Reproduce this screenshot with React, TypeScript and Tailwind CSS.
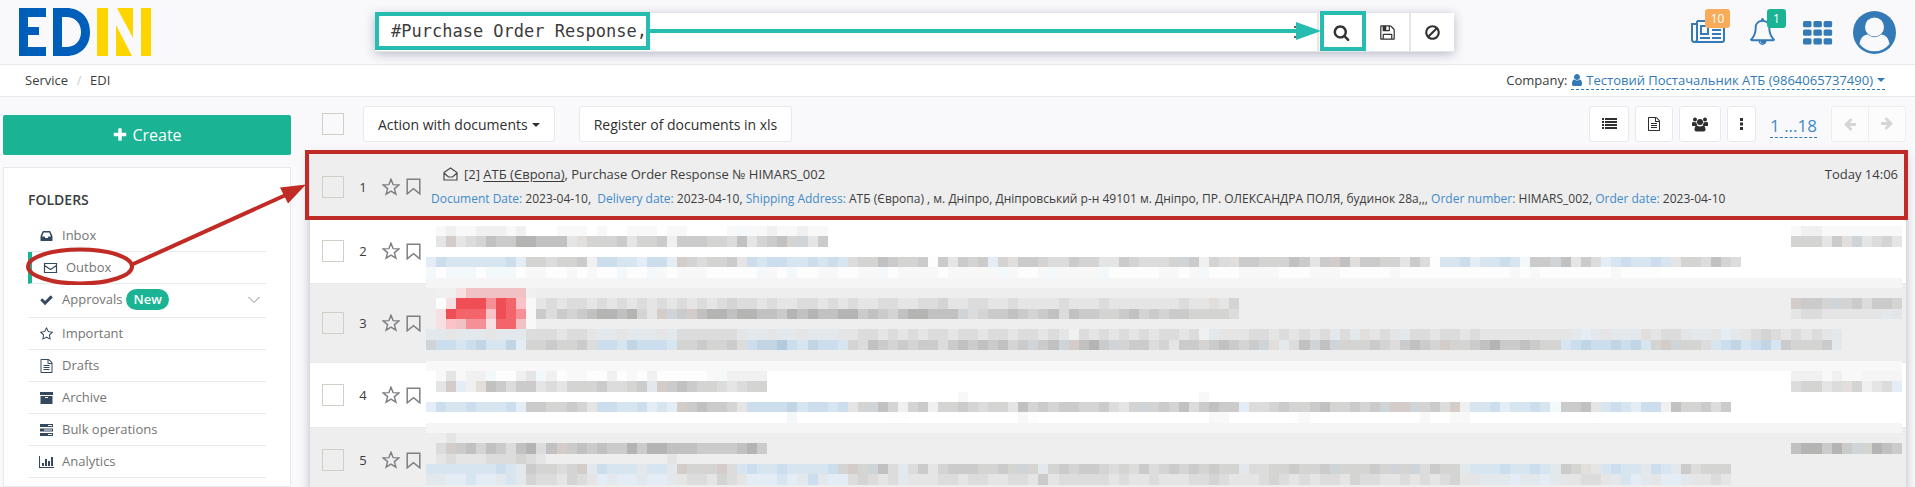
import React from "react";

const FA = {
  plus: "M1600 736v192q0 40-28 68t-68 28h-416v416q0 40-28 68t-68 28h-192q-40 0-68-28t-28-68v-416h-416q-40 0-68-28t-28-68v-192q0-40 28-68t68-28h416v-416q0-40 28-68t68-28h192q40 0 68 28t28 68v416h416q40 0 68 28t28 68z",
  search:
    "M1216 832q0-185-131.5-316.5t-316.5-131.5-316.5 131.5-131.5 316.5 131.5 316.5 316.5 131.5 316.5-131.5 131.5-316.5zm512 832q0 52-38 90t-90 38q-54 0-90-38l-343-342q-179 124-399 124-143 0-273.5-55.5t-225-150-150-225-55.5-273.5 55.5-273.5 150-225 225-150 273.5-55.5 273.5 55.5 225 150 150 225 55.5 273.5q0 220-124 399l343 343q37 37 37 90z",
  save: "M512 1536h768v-384h-768v384zm896 0h128v-896q0-14-10-38.5t-20-34.5l-281-281q-10-10-34-20t-39-10v416q0 40-28 68t-68 28h-576q-40 0-68-28t-28-68v-416h-128v1280h128v-416q0-40 28-68t68-28h832q40 0 68 28t28 68v416zm-384-928v-320q0-13-9.500-22.500t-22.500-9.500h-192q-13 0-22.500 9.500t-9.500 22.500v320q0 13 9.500 22.500t22.500 9.500h192q13 0 22.500-9.500t9.500-22.500zm640 32v928q0 40-28 68t-68 28h-1344q-40 0-68-28t-28-68v-1344q0-40 28-68t68-28h928q40 0 88 20t76 48l280 280q28 28 48 76t20 88z",
  ban: "M1440 893q0-161-87-295l-754 753q137 89 297 89 111 0 211.5-43.5t173.5-116.5 116-174.5 43-212.5zm-999 299l755-754q-135-91-300-91-148 0-273 73t-198 199-73 274q0 162 89 299zm1223-299q0 157-61 300t-163.5 246-245 164-298.5 61-298.5-61-245-164-163.5-246-61-300 61-299.5 163.5-245.5 245-164 298.5-61 298.5 61 245 164 163.5 245.5 61 299.5z",
  bell: "M912 1696q0-16-16-16-59 0-101.5-42.5t-42.5-101.5q0-16-16-16t-16 16q0 73 51.500 124.500t124.500 51.500q16 0 16-16zm-666-288h1300q-266-300-266-832 0-51-24-105t-69-103-121.5-80.5-169.5-31.5-169.500 31.500-121.500 80.500-69 103-24 105q0 532-266 832zm1482 0q0 52-38 90t-90 38h-448q0 106-75 181t-181 75-181-75-75-181h-448q-52 0-90-38t-38-90q50-42 91-88t85-119.500 74.500-158.500 50-206 19.500-260q0-152 117-282.500t307-158.500q-8-19-8-39 0-40 28-68t68-28 68 28 28 68q0 20-8 39 190 28 307 158.500t117 282.500q0 139 19.500 260t50 206 74.500 158.500 85 119.500 91 88z",
  user: "M1536 1399q0 109-62.500 187t-150.500 78h-854q-88 0-150.500-78t-62.500-187q0-85 8.500-160.500t31.500-152 58.500-131 94-89 134.500-34.500q131 128 313 128t313-128q76 0 134.500 34.500t94 89 58.500 131 31.500 152 8.500 160.500zm-256-887q0 159-112.500 271.500t-271.500 112.500-271.500-112.500-112.500-271.500 112.500-271.500 271.500-112.500 271.500 112.500 112.500 271.500z",
  file: "M1596 380q28 28 48 76t20 88v1152q0 40-28 68t-68 28h-1344q-40 0-68-28t-28-68v-1600q0-40 28-68t68-28h896q40 0 88 20t76 48zm-444-244v376h376q-10-29-22-41l-313-313q-12-12-41-22zm384 1528v-1024h-416q-40 0-68-28t-28-68v-416h-768v1536h1280zm-1024-864q0-14 9-23t23-9h704q14 0 23 9t9 23v64q0 14-9 23t-23 9h-704q-14 0-23-9t-9-23v-64zm736 224q14 0 23 9t9 23v64q0 14-9 23t-23 9h-704q-14 0-23-9t-9-23v-64q0-14 9-23t23-9h704zm0 256q14 0 23 9t9 23v64q0 14-9 23t-23 9h-704q-14 0-23-9t-9-23v-64q0-14 9-23t23-9h704z",
  inbox:
    "M1151 960h316q-1-3-2.500-8t-2.500-8l-212-496h-708l-212 496q-1 2-2.500 8t-2.500 8h316l95 192h320zm513 30v482q0 26-19 45t-45 19h-1408q-26 0-45-19t-19-45v-482q0-62 25-123l238-552q10-25 36.500-42t52.500-17h832q26 0 52.500 17t36.500 42l238 552q25 61 25 123z",
  check:
    "M1671 566q0 40-28 68l-724 724-136 136q-28 28-68 28t-68-28l-136-136-362-362q-28-28-28-68t28-68l136-136q28-28 68-28t68 28l294 295 656-657q28-28 68-28t68 28l136 136q28 28 28 68z",
  star: "M1201 1004l306-297-422-62-189-382-189 382-422 62 306 297-73 421 378-199 377 199zm527-357q0 22-26 48l-363 354 86 500q1 7 1 20 0 50-41 50-19 0-40-12l-449-236-449 236q-22 12-40 12-21 0-31.500-14.500t-10.500-35.500q0-6 2-20l86-500-364-354q-25-27-25-48 0-37 56-46l502-73 225-455q19-41 49-41t49 41l225 455 502 73q56 9 56 46z",
  arrow:
    "M1664 896v128q0 53-32.500 90.500t-84.500 37.500h-704l293 294q38 36 38 90t-38 90l-75 76q-37 37-90 37-52 0-91-37l-651-652q-37-37-37-90 0-52 37-91l651-650q38-38 91-38 52 0 90 38l75 74q38 38 38 91t-38 91l-293 293h704q52 0 84.500 37.500t32.500 90.500z",
};

function Fa({ name, className }: { name: keyof typeof FA; className: string }) {
  return (
    <svg viewBox="0 0 1792 1792" fill="currentColor" className={className} aria-hidden="true">
      <path d={FA[name]} />
    </svg>
  );
}

function Caret({ className = "" }: { className?: string }) {
  return (
    <svg viewBox="0 0 8 4" className={"inline-block h-1 w-2 align-middle " + className} fill="currentColor" aria-hidden="true">
      <path d="M0 0h8L4 4z" />
    </svg>
  );
}

function Logo() {
  return (
    <svg viewBox="0 0 132 48" className="h-12 w-[132px]" role="img" aria-label="EDIN">
      <g fill="#005ebb">
        <path d="M0 0h27v9H9v10h11v8H9v12h18v9H0z" />
        <path fillRule="evenodd" d="M34 0h13c15 0 24 10 24 24s-9 24-24 24H34zM43 9v30h4c9 0 15-6 15-15S56 9 47 9z" />
      </g>
      <g fill="#ffd500">
        <path d="M78 0h11v48H78zM122 0h10v48h-10zM98 0h16v30zM97 17l16 31H97z" />
      </g>
    </svg>
  );
}

function Newspaper() {
  return (
    <svg viewBox="0 0 34 24" className="h-6 w-[34px]" fill="none" stroke="#337ab7" strokeWidth="2" aria-hidden="true">
      <path d="M6 1h27v19a2 2 0 0 1-2 2H3.500A2.500 2.500 0 0 1 1 19.500V4h5M6 1v18.500A2.500 2.500 0 0 1 3.500 22" />
      <path d="M10 6h7v8h-7zM9 18h10M21 6h9M21 10h9M21 14h9M21 18h9" />
    </svg>
  );
}

function Grid() {
  return (
    <svg viewBox="0 0 30 24" className="h-6 w-[30px]" fill="#337ab7" aria-hidden="true">
      {[0, 8.6, 17.2].map((y) =>
        [0, 10.4, 20.6].map((x) => <rect key={x + "-" + y} x={x} y={y} width="8.500" height="6.200" rx="1.500" />)
      )}
    </svg>
  );
}

function Avatar() {
  return (
    <svg viewBox="0 0 43 43" className="h-[43px] w-[43px]" aria-hidden="true">
      <circle cx="21.500" cy="21.500" r="21.500" fill="#337ab7" />
      <circle cx="21.500" cy="16" r="9.500" fill="#f9f9fb" />
      <path d="M6.500 33c1-6 4-9.500 8.500-9.500 4 3.500 9 3.500 13 0 4.500 0 7.500 3.500 8.500 9.500A19 19 0 0 1 6.500 33z" fill="#f9f9fb" />
    </svg>
  );
}

function FolderIcon({ kind }: { kind: string }) {
  const cls = "h-[14px] w-[15px] shrink-0 text-[#34495e]";
  if (kind === "inbox" || kind === "check" || kind === "star" || kind === "file") {
    return <Fa name={kind} className={cls} />;
  }
  return (
    <svg viewBox="0 0 15 14" className={cls} fill="currentColor" aria-hidden="true">
      {kind === "mail" && <path d="M1.500 2.500h12v9h-12zM1.500 4.500l6 4 6-4" fill="none" stroke="currentColor" strokeWidth="1.200" />}
      {kind === "archive" && <path fillRule="evenodd" d="M1 1h13v3H1zM1.500 5h12v8h-12zM6 6v1h3V6z" />}
      {kind === "server" && <path fillRule="evenodd" d="M1 1h13v3H1zM1 5.500h13v3H1zM1 10h13v3H1zM9 2v1h4V2zM5 6.500v1h8v-1zM9 11v1h4v-1z" />}
      {kind === "chart" && <path d="M0 1h1v11h14v1H0zM3 8h2v3H3zM6 4h2v7H6zM9 6h2v5H9zM12 2h2v9h-2z" />}
    </svg>
  );
}

const folders = [
  { label: "Inbox", icon: "inbox" },
  { label: "Outbox", icon: "mail", active: true },
  { label: "Approvals", icon: "check", isNew: true },
  { label: "Important", icon: "star" },
  { label: "Drafts", icon: "file" },
  { label: "Archive", icon: "archive" },
  { label: "Bulk operations", icon: "server" },
  { label: "Analytics", icon: "chart" },
];

const tones: Record<string, string> = {
  w: "#fdfdfd", a: "#f8f8f8", b: "#f0f0f0", c: "#e5e5e5", d: "#dcdcdc", e: "#d4d4d3", f: "#cbcbcb", g: "#c1c1c1", h: "#b4b4b3",
  i: "#d3ccc9", j: "#e2dedc", k: "#cfd4d8", p: "#f5f5f5",
  A: "#f3f8fb", B: "#e4edf5", C: "#d6e5f0", D: "#ccdeed", E: "#c2d5e4", F: "#b3c9dc", G: "#e3e8ec",
  R: "#f04e55", S: "#f3656b", T: "#f59196", U: "#f0c1c5", V: "#f8dfe2", W: "#fbc3c7",
};

type Strip = { y: number; h: number; runs: [number, string][] };

const full = "p".repeat(147);
const pale = "a".repeat(147);

const blurred: { n: number; height: number; bg: string; strips: Strip[] }[] = [
  {
    n: 2,
    height: 65,
    bg: "bg-white",
    strips: [
      { y: 7, h: 10, runs: [[1, "abaabbbab"], [13, "aaa.a..aaa.aa"], [30, "aAaabaabaa"], [136, "abbaaaaaaaa"]] },
      { y: 17, h: 11, runs: [[1, "cicdegffhhgggcjeeefceefbfffeedgcefgekcf"], [136, "eeecfjkcdec"]] },
      {
        y: 38,
        h: 10,
        runs: [
          [0, "BDCCCCCCDBeedeefbDDCCBDDBiedeefcDCDDCCDCDCde"],
          [44, "egfeefwfcfefBejffeddfeeccfedddekfbedjffeeegfcfigjffeec"],
          [98, "fdwCCDBCCDCAffkgcfdBCDCCDCceedged"],
        ],
      },
      { y: 48, h: 11, runs: [[0, "AwAAAwAAAwaawwawawwAwwAawaaawwwwwAawAwwaawwaaAwaaaawaaaaaAawwaAaaaaAwwwwwaawaAwwwaaaawwwaaawwwwwawwwwwwwwwwwawawwwwwwwawwww"]] },
      { y: 59, h: 6, runs: [[0, full]] },
    ],
  },
  {
    n: 3,
    height: 79,
    bg: "bg-[#eeeeee]",
    strips: [
      { y: 0, h: 4, runs: [[0, full]] },
      { y: 4, h: 10, runs: [[1, "bbVUUUUUUb"]] },
      { y: 14, h: 11, runs: [[1, "wVRRRTRSWa"], [11, "cdcddcdcdcdcdcdcdcdeddcdccddcdcdccddccddeccddccdccccdcccdcccccccdccjce"], [136, "iffekefdffe"]] },
      { y: 25, h: 10, runs: [[1, "VRSSSWRSTa"], [11, "fdfefghhghecikfighhghhggfhghgghhfgfeghhgggkdeffgfefgdgffeefgefeffeeeed"], [136, "cddccccccGc"]] },
      { y: 35, h: 10, runs: [[1, "VWUTTVSSUa"]] },
      {
        y: 45,
        h: 11,
        runs: [
          [0, "GGcGGGcGGGdddcddcGGcGGGcGddddddcGGcGGcGGGccd"],
          [44, "dcdcdcddcddcddcddcdcbdcdcdcdcddcdbGcccddcdcdcdGdGjcdc"],
          [97, "GddcddcdcccccccccGBGcGGGjcddcGGcBGcdedcdcdcG"],
        ],
      },
      {
        y: 56,
        h: 10,
        runs: [
          [0, "kDDCDECCEBeefeefdDDCEDDDCeefeefdDEEFDCEDDCed"],
          [44, "gfefeffdfgfgfgefkfgkighfkeffdecffefgfefkjGdgkgkeeefed"],
          [97, "fgfeieefghffgfeeCDEDDEDECeikeedCDECDECfeeefG"],
        ],
      },
      { y: 77, h: 2, runs: [[0, pale]] },
    ],
  },
  {
    n: 4,
    height: 65,
    bg: "bg-white",
    strips: [
      { y: 0, h: 8, runs: [[0, pale]] },
      { y: 8, h: 10, runs: [[1, "acabbAwwbcAbwaawwbwawbwwwwwaAbbbb"], [136, "bbbabaapppp"]] },
      { y: 18, h: 11, runs: [[1, "ciBbjgfdffcdceeefddefGifgfeedcdee"], [136, "deecdjebcdB"]] },
      { y: 29, h: 10, runs: [[53, "a"], [77, "a"]] },
      {
        y: 39,
        h: 10,
        runs: [
          [0, "BDCCDCCCDBffeefecDDCCDBCBifgffecDDDDECDDCDce"],
          [44, "kgebefbeefedeecgefeffeefdcekefegdfgffBddefeefgeefefki"],
          [97, "ikefdibCCDBCCDCAffgcCDCBDDbgeefdf"],
        ],
      },
      { y: 49, h: 11, runs: [[36, "A"], [46, "ww"], [59, "aw"], [78, "aa"], [86, "waw"], [99, "a"], [102, "aa"], [116, "w"]] },
      { y: 60, h: 5, runs: [[0, full]] },
    ],
  },
  {
    n: 5,
    height: 65,
    bg: "bg-[#eeeeee]",
    strips: [
      { y: 0, h: 5, runs: [[0, full]] },
      { y: 5, h: 10, runs: [[2, "c"]] },
      { y: 15, h: 11, runs: [[1, "difgegfdghdgifgfgffhfhhgggffffghf"], [136, "ghhfhfkehgf"]] },
      { y: 26, h: 10, runs: [[1, "cdcccdddedc"], [24, "c"]] },
      {
        y: 36,
        h: 10,
        runs: [
          [0, "CCCCCCCDCGfeedeiGDCCCGCCGieeeidCDCCDCCCCDeie"],
          [44, "kgdGdfcefffeefekeGefeffededfdefefefeeGddeefeefkeeefek"],
          [97, "ekdfeeGCCCDCCDCGfejcCDCCGDCGfdeee"],
        ],
      },
      {
        y: 46,
        h: 11,
        runs: [
          [0, "GGBBCBBGCGeddcedcBGBBGBBGcddcedcBBBCBGDGBBde"],
          [44, "dcdGcccddcddccddcfcdddddcdccdcccddedcccdedcdcddceddcc"],
          [97, "dcdcdeccGGGBGGBGccddcGCBGcBBGccdc"],
        ],
      },
    ],
  },
];

function Mosaic({ height, strips }: { height: number; strips: Strip[] }) {
  return (
    <svg
      viewBox={"0 0 1476 " + height}
      preserveAspectRatio="none"
      shapeRendering="crispEdges"
      className="block h-full w-full"
      aria-hidden="true"
    >
      {strips.map((s) =>
        s.runs.map(([start, cells]) =>
          cells.split("").map((c, k) => {
            if (!tones[c]) return null;
            const x = Math.round((start + k) * 10.04);
            const end = Math.round((start + k + 1) * 10.04);
            return <rect key={s.y + "-" + (start + k)} x={x} y={s.y} width={end - x} height={s.h} fill={tones[c]} />;
          })
        )
      )}
    </svg>
  );
}

function Tick({ label }: { label: string }) {
  return <input type="checkbox" aria-label={label} className="block h-[22px] w-[22px] shrink-0 appearance-none border border-[#d1cec8]" />;
}

function RowTools({ n }: { n: number }) {
  return (
    <div className="flex h-full w-[116px] shrink-0 items-center pl-3">
      <Tick label={"Select document " + n} />
      <span className="w-[38px] text-center text-[13px] leading-5">{n}</span>
      <button type="button" aria-label="Mark as important">
        <svg viewBox="0 0 18 18" className="h-[18px] w-[18px]" fill="none" stroke="#7d7f82" strokeWidth="1.400" aria-hidden="true">
          <path d="M9 1.200l2.100 5.400 5.800.300-4.500 3.700 1.500 5.600L9 13.100l-4.900 3.100 1.500-5.600L1.100 6.900l5.800-.300z" />
        </svg>
      </button>
      <button type="button" aria-label="Bookmark" className="ml-1.5">
        <svg viewBox="0 0 15 17" className="h-[17px] w-[15px]" fill="none" stroke="#7d7f82" strokeWidth="1.500" aria-hidden="true">
          <path d="M1.200 1.200h12.600v14.600L7.500 10.600 1.200 15.800z" />
        </svg>
      </button>
    </div>
  );
}

const toolBtn = "flex h-9 items-center justify-center rounded-[3px] border border-[#e7eaec] bg-white text-[#2f2f2f]";

function Field({ name, children }: { name: string; children: React.ReactNode }) {
  return (
    <>
      <span className="text-[#428bca]">{name}</span> {children}
    </>
  );
}

export default function App() {
  return (
    <div className="relative flex h-screen flex-col overflow-hidden bg-[#f9f9fb] font-['Open_Sans','Noto_Sans',sans-serif] text-[13px] text-[#3c3c3c]">
      <header className="flex h-[65px] shrink-0 items-start border-b border-[#e7eaec] pr-[19px] pl-[19px]">
        <a href="#home" className="mt-2 shrink-0">
          <Logo />
        </a>
        <form className="relative mt-[13px] mr-[237px] ml-[224px] flex h-[39px] flex-1 border-b border-[#e5e6e7] bg-white shadow-[0_2px_10px_rgba(60,60,110,0.35)]">
          <input
            aria-label="Search"
            defaultValue="#Purchase Order Response,"
            className="min-w-0 flex-1 bg-transparent pl-4 font-['DejaVu_Sans_Mono',monospace] text-[17px] text-[#3c3c3c] outline-none"
          />
          <button type="button" aria-label="Filter" className="w-6 text-[#333]">
            <svg viewBox="0 0 14 14" className="h-[14px] w-[14px]" fill="none" stroke="currentColor" strokeWidth="1.500" aria-hidden="true">
              <path d="M1 2h4M1 12h4" />
            </svg>
          </button>
          <button type="submit" aria-label="Find" className="flex w-12 items-center justify-center border-l-2 border-[#e5e6e7] pr-0.5">
            <Fa name="search" className="h-[17px] w-[17px] text-[#333]" />
          </button>
          <button type="button" aria-label="Save search" className="flex w-11 items-center justify-center">
            <Fa name="save" className="h-[17px] w-[17px] text-[#333]" />
          </button>
          <button type="button" aria-label="Clear" className="flex w-[45px] items-center justify-center border-l-2 border-[#e5e6e7]">
            <Fa name="ban" className="h-[17px] w-[17px] text-[#333]" />
          </button>
          <span className="pointer-events-none absolute -top-px left-0 h-[38px] w-[275px] border-4 border-[#26bcb0]" />
          <span className="pointer-events-none absolute top-4 right-[154px] left-[275px] h-1 bg-[#26bcb0]" />
          <svg viewBox="0 0 25 18" className="pointer-events-none absolute top-[9px] right-[133px] h-[18px] w-[25px]" fill="#26bcb0" aria-hidden="true">
            <path d="M0 0l25 9-25 9z" />
          </svg>
          <span className="pointer-events-none absolute -top-0.5 right-[88px] h-10 w-[46px] border-4 border-[#26bcb0]" />
        </form>
        <nav className="flex shrink-0 items-start" aria-label="Account">
          <a href="#news" aria-label="News" className="relative mt-5">
            <Newspaper />
            <span className="absolute -top-[11px] left-[14px] flex h-[19px] w-[25px] items-center justify-center rounded-[3px] bg-[#f8ac59] text-xs text-white">10</span>
          </a>
          <a href="#alerts" aria-label="Notifications" className="relative mt-[17px] ml-6 text-[#337ab7]">
            <Fa name="bell" className="h-[29px] w-[27px]" />
            <span className="absolute -top-2 left-[18px] flex h-[19px] w-[19px] items-center justify-center rounded-[3px] bg-[#1ab394] text-xs text-white">1</span>
          </a>
          <a href="#apps" aria-label="Applications" className="mt-[21px] ml-[27px]">
            <Grid />
          </a>
          <a href="#profile" aria-label="Profile" className="mt-[11px] ml-5">
            <Avatar />
          </a>
        </nav>
      </header>

      <div className="flex h-8 shrink-0 items-center justify-between border-b border-[#e7eaec] bg-white pr-[30px] pl-[25px]">
        <nav className="flex" aria-label="Breadcrumb">
          <a href="#service">Service</a>
          <span className="w-[22px] text-center text-[#ccc]">/</span>
          <a href="#edi">EDI</a>
        </nav>
        <div className="flex gap-1">
          <span>Company:</span>
          <a href="#company" className="flex items-center gap-0.5 border-b border-dashed border-[#337ab7] leading-[18px] text-[#337ab7]">
            <Fa name="user" className="-ml-px h-[14px] w-[14px]" />
            Тестовий Постачальник АТБ (9864065737490)
            <Caret className="ml-0.5" />
          </a>
        </div>
      </div>

      <div className="flex min-h-0 flex-1">
        <aside className="ml-[3px] flex w-72 shrink-0 flex-col pt-[18px]">
          <button type="button" className="flex h-10 shrink-0 items-center justify-center gap-1 rounded-[2px] bg-[#1ab394] text-base text-white">
            <Fa name="plus" className="h-4 w-4" />
            Create
          </button>
          <div className="mt-3 flex-1 border border-[#e7eaec] bg-white px-6">
            <h2 className="mt-[22px] text-sm leading-5 font-semibold">FOLDERS</h2>
            <ul className="mt-2.5">
              {folders.map((f) => (
                <li key={f.label}>
                  <a
                    href={"#" + f.label.toLowerCase()}
                    className={
                      "flex items-center border-b border-[#e7eaec] text-[#757575] " +
                      (f.isNew ? "h-[34px] pb-0.5 pl-[11px] " : "h-8 pl-[11px] ") +
                      (f.active ? "border-l-4 border-l-[#1ab394]" : "")
                    }
                  >
                    <FolderIcon kind={f.icon} />
                    <span className="ml-2">{f.label}</span>
                    {f.isNew && (
                      <>
                        <span className="ml-1 flex h-[21px] items-center rounded-full bg-[#1ab394] px-[7px] font-semibold text-white">New</span>
                        <svg viewBox="0 0 12 8" className="mr-1.5 ml-auto h-2 w-3" fill="none" stroke="#8a8a8a" aria-hidden="true">
                          <path d="M0.500 1L6 6.500 11.500 1" />
                        </svg>
                      </>
                    )}
                  </a>
                </li>
              ))}
            </ul>
          </div>
        </aside>

        <main className="mr-[9px] ml-[19px] flex min-w-0 flex-1 flex-col">
          <div className="flex h-[57px] shrink-0 items-center pb-[3px] pl-3 text-sm">
            <Tick label="Select all documents" />
            <button type="button" className={toolBtn + " ml-[19px] gap-1 px-[14px] pt-0.5"}>
              Action with documents
              <Caret />
            </button>
            <button type="button" className={toolBtn + " ml-6 px-[14px] pt-0.5"}>
              Register of documents in xls
            </button>
            <button type="button" aria-label="List view" className={toolBtn + " ml-auto w-10"}>
              <svg viewBox="0 0 15 12" className="h-3 w-[15px]" fill="currentColor" aria-hidden="true">
                <path d="M0 0h2v2H0zM3 0h12v2H3zM0 3h2v2H0zM3 3h12v2H3zM0 6h2v2H0zM3 6h12v2H3zM0 9h2v2H0zM3 9h12v2H3z" />
              </svg>
            </button>
            <button type="button" aria-label="Report" className={toolBtn + " ml-1.5 w-[38px]"}>
              <Fa name="file" className="h-[14px] w-[14px]" />
            </button>
            <button type="button" aria-label="Groups" className={toolBtn + " ml-1.5 w-[42px]"}>
              <svg viewBox="0 0 16 15" className="h-[15px] w-4" fill="currentColor" aria-hidden="true">
                <circle cx="3" cy="2.500" r="2" />
                <circle cx="13" cy="2.500" r="2" />
                <circle cx="8" cy="5" r="3" />
                <path d="M0 8.500V6.500C0 5.500.6 4.800 1.500 4.800c.9.600 2 .7 2.800.2 0 1.200.3 2 1 3l-1.800 1H.9C.4 9 0 9 0 8.500zM16 8.500V6.500c0-1-.6-1.700-1.500-1.700-.9.600-2 .7-2.800.2 0 1.200-.3 2-1 3l1.800 1h2.600c.5 0 .9 0 .9-.5zM4.500 14.500c-1.400 0-2-.8-2-2 0-2.300.7-4 2.500-4 1.700 1.300 4.300 1.300 6 0 1.800 0 2.500 1.700 2.500 4 0 1.200-.6 2-2 2z" />
              </svg>
            </button>
            <button type="button" aria-label="More" className={toolBtn + " ml-1.5 w-[29px]"}>
              <svg viewBox="0 0 3 12" className="h-3 w-[3px]" fill="currentColor" aria-hidden="true">
                <path d="M0 0h3v3H0zM0 4.500h3v3H0zM0 9h3v3H0z" />
              </svg>
            </button>
            <a href="#pages" className="mt-1 ml-[14px] border-b border-dashed border-[#337ab7] text-[17px] leading-[22px] text-[#428bca]">
              1 ...18
            </a>
            <div className="ml-[14px] flex text-[#d5d5d5]">
              <button type="button" aria-label="Previous page" className="flex h-9 w-[38px] items-center justify-center rounded-l-[3px] border border-[#eceef0] bg-[#fcfcfd]">
                <Fa name="arrow" className="h-[14px] w-[14px]" />
              </button>
              <button type="button" aria-label="Next page" className="-ml-px flex h-9 w-[38px] items-center justify-center rounded-r-[3px] border border-[#eceef0] bg-[#fcfcfd]">
                <Fa name="arrow" className="h-[14px] w-[14px] rotate-180" />
              </button>
            </div>
          </div>

          <section className="flex-1 bg-white shadow-[0_2px_10px_rgba(60,60,110,0.35)]" aria-label="Documents">
            <article className="relative flex h-[65px] bg-[#eeeeee]">
              <RowTools n={1} />
              <div className="flex min-w-0 flex-1 flex-col pt-2.5 pr-2 pl-[5px]">
                <div className="flex items-center leading-5">
                  <svg viewBox="0 0 15 14" className="mr-1.5 ml-3 h-[14px] w-[15px]" fill="none" stroke="#4a4a4a" strokeWidth="1.200" aria-hidden="true">
                    <path d="M1 5.500L7.500 1 14 5.500V13H1zM1 6l4.500 4h4L14 6" />
                  </svg>
                  <span>
                    [2]{" "}
                    <a href="#partner" className="underline underline-offset-2">
                      АТБ (Європа)
                    </a>
                    , Purchase Order Response № HIMARS_002
                  </span>
                  <time className="ml-auto">Today 14:06</time>
                </div>
                <p className="mt-[5px] truncate text-xs leading-5">
                  <Field name="Document Date:">2023-04-10, </Field>&nbsp;
                  <Field name="Delivery date:">2023-04-10, </Field>
                  <Field name="Shipping Address:">АТБ (Європа) , м. Дніпро, Дніпровський р-н 49101 м. Дніпро, ПР. ОЛЕКСАНДРА ПОЛЯ, будинок 28а,,, </Field>
                  <Field name="Order number:">HIMARS_002, </Field>
                  <Field name="Order date:">2023-04-10</Field>
                </p>
              </div>
              <span className="pointer-events-none absolute -top-1 -right-0.5 -bottom-px -left-[5px] border-4 border-[#c02b26]" />
            </article>
            {blurred.map((r) => (
              <article key={r.n} className={"flex " + r.bg} style={{ height: r.height }}>
                <div className="shrink-0 border-b border-[#e7eaec]">
                  <RowTools n={r.n} />
                </div>
                <div className="min-w-0 flex-1">
                  <Mosaic height={r.height} strips={r.strips} />
                </div>
                <div className="w-1 shrink-0 border-b border-[#e7eaec]" />
              </article>
            ))}
          </section>
        </main>
      </div>

      <svg viewBox="0 0 290 105" className="pointer-events-none absolute top-[180px] left-[24px] h-[105px] w-[290px]" fill="none" stroke="#c02b26" strokeWidth="4" aria-hidden="true">
        <ellipse cx="56" cy="86.500" rx="52" ry="17" />
        <path d="M107 85L264 14" />
        <path d="M256 7.500l26-3-18 19z" fill="#c02b26" stroke="none" />
      </svg>
    </div>
  );
}
